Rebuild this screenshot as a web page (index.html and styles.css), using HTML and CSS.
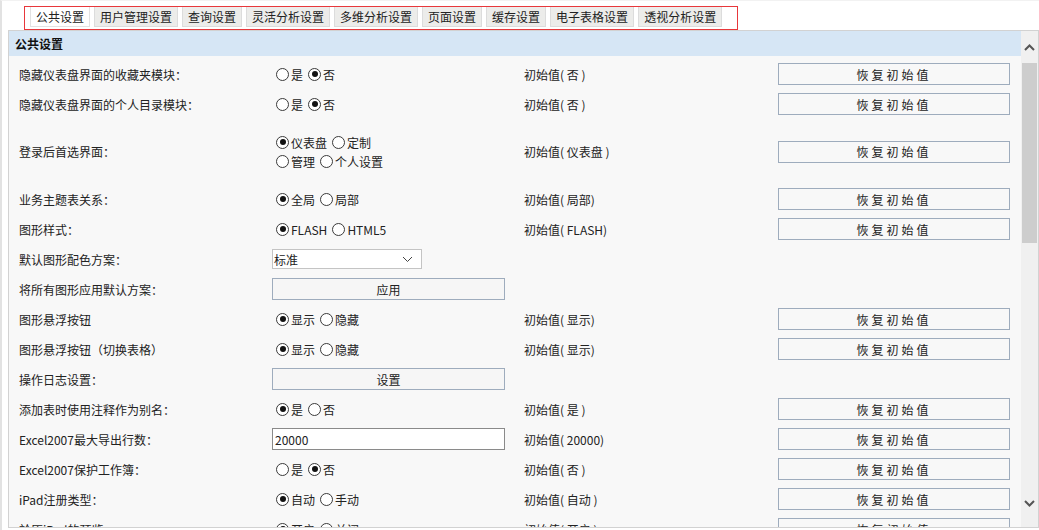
FILE: index.html
```html
<!DOCTYPE html>
<html lang="zh-CN">
<head>
    <meta charset="UTF-8">
    <title>公共设置</title>
    <link rel="stylesheet" href="styles.css">
</head>
<body>
<div class="page">
    <!-- 顶部标签 -->
    <div class="tabs">
        <div class="tab active">公共设置</div>
        <div class="tab">用户管理设置</div>
        <div class="tab">查询设置</div>
        <div class="tab">灵活分析设置</div>
        <div class="tab">多维分析设置</div>
        <div class="tab">页面设置</div>
        <div class="tab">缓存设置</div>
        <div class="tab">电子表格设置</div>
        <div class="tab">透视分析设置</div>
    </div>

    <div class="panel">
        <div class="panel-main">
            <div class="panel-title">公共设置</div>
            <div class="rows">
                <div class="row">
                    <div class="label">隐藏仪表盘界面的收藏夹模块：</div>
                    <div class="ctrl"><span class="radio"></span>是<span class="radio on"></span>否</div>
                    <div class="init">初始值( 否 )</div>
                    <div><button class="btn-reset">恢复初始值</button></div>
                </div>
                <div class="row">
                    <div class="label">隐藏仪表盘界面的个人目录模块：</div>
                    <div class="ctrl"><span class="radio"></span>是<span class="radio on"></span>否</div>
                    <div class="init">初始值( 否 )</div>
                    <div><button class="btn-reset">恢复初始值</button></div>
                </div>
                <div class="row tall">
                    <div class="label">登录后首选界面：</div>
                    <div class="ctrl two-line">
                        <div><span class="radio on"></span>仪表盘<span class="radio"></span>定制</div>
                        <div><span class="radio"></span>管理<span class="radio"></span>个人设置</div>
                    </div>
                    <div class="init">初始值( 仪表盘 )</div>
                    <div><button class="btn-reset">恢复初始值</button></div>
                </div>
                <div class="row">
                    <div class="label">业务主题表关系：</div>
                    <div class="ctrl"><span class="radio on"></span>全局<span class="radio"></span>局部</div>
                    <div class="init">初始值( 局部)</div>
                    <div><button class="btn-reset">恢复初始值</button></div>
                </div>
                <div class="row">
                    <div class="label">图形样式：</div>
                    <div class="ctrl"><span class="radio on"></span>FLASH<span class="radio"></span>HTML5</div>
                    <div class="init">初始值( FLASH)</div>
                    <div><button class="btn-reset">恢复初始值</button></div>
                </div>
                <div class="row">
                    <div class="label">默认图形配色方案：</div>
                    <div class="ctrl">
                        <div class="select">
                            <span>标准</span>
                            <svg width="11" height="7" viewBox="0 0 11 7"><path d="M1 1 L5.5 5.5 L10 1" fill="none" stroke="#444" stroke-width="1"/></svg>
                        </div>
                    </div>
                    <div></div>
                    <div></div>
                </div>
                <div class="row">
                    <div class="label">将所有图形应用默认方案：</div>
                    <div class="ctrl"><button class="btn-wide">应用</button></div>
                    <div></div>
                    <div></div>
                </div>
                <div class="row">
                    <div class="label">图形悬浮按钮</div>
                    <div class="ctrl"><span class="radio on"></span>显示<span class="radio"></span>隐藏</div>
                    <div class="init">初始值( 显示)</div>
                    <div><button class="btn-reset">恢复初始值</button></div>
                </div>
                <div class="row">
                    <div class="label">图形悬浮按钮（切换表格）</div>
                    <div class="ctrl"><span class="radio on"></span>显示<span class="radio"></span>隐藏</div>
                    <div class="init">初始值( 显示)</div>
                    <div><button class="btn-reset">恢复初始值</button></div>
                </div>
                <div class="row">
                    <div class="label">操作日志设置：</div>
                    <div class="ctrl"><button class="btn-wide">设置</button></div>
                    <div></div>
                    <div></div>
                </div>
                <div class="row">
                    <div class="label">添加表时使用注释作为别名：</div>
                    <div class="ctrl"><span class="radio on"></span>是<span class="radio"></span>否</div>
                    <div class="init">初始值( 是 )</div>
                    <div><button class="btn-reset">恢复初始值</button></div>
                </div>
                <div class="row">
                    <div class="label">Excel2007最大导出行数：</div>
                    <div class="ctrl"><input class="text-input" type="text" value="20000"></div>
                    <div class="init">初始值( 20000)</div>
                    <div><button class="btn-reset">恢复初始值</button></div>
                </div>
                <div class="row">
                    <div class="label">Excel2007保护工作簿：</div>
                    <div class="ctrl"><span class="radio"></span>是<span class="radio on"></span>否</div>
                    <div class="init">初始值( 否 )</div>
                    <div><button class="btn-reset">恢复初始值</button></div>
                </div>
                <div class="row">
                    <div class="label">iPad注册类型：</div>
                    <div class="ctrl"><span class="radio on"></span>自动<span class="radio"></span>手动</div>
                    <div class="init">初始值( 自动 )</div>
                    <div><button class="btn-reset">恢复初始值</button></div>
                </div>
                <div class="row">
                    <div class="label">於原iPad的预览：</div>
                    <div class="ctrl"><span class="radio on"></span>开启<span class="radio"></span>关闭</div>
                    <div class="init">初始值( 开启 )</div>
                    <div><button class="btn-reset">恢复初始值</button></div>
                </div>
            </div>
        </div>

        <!-- 滚动条 -->
        <div class="scrollbar">
            <div class="sb-up">
                <svg width="11" height="7" viewBox="0 0 11 7"><path d="M1 6 L5.5 1.5 L10 6" fill="none" stroke="#555" stroke-width="2"/></svg>
            </div>
            <div class="sb-thumb"></div>
            <div class="sb-space"></div>
            <div class="sb-down">
                <svg width="11" height="7" viewBox="0 0 11 7"><path d="M1 1 L5.5 5.5 L10 1" fill="none" stroke="#555" stroke-width="2"/></svg>
            </div>
        </div>
    </div>
</div>
</body>
</html>
```

FILE: styles.css
```css
html, body {
    margin: 0;
    padding: 0;
    height: 530px;
    overflow: hidden;
    background: #fff;
    font-family: "Microsoft YaHei", "Noto Sans CJK SC", sans-serif;
    font-size: 12px;
    color: #222;
}
.page {
    height: 530px;
    box-sizing: border-box;
    border-left: 2px solid #e2e2e2;
    border-top: 1px solid #f2f2f2;
    padding-top: 5px;
}

/* 标签栏 */
.tabs {
    display: flex;
    gap: 4px;
    width: 702px;
    margin-left: 22px;
    padding: 0 5px 1px 5px;
    border: 1px solid #e8373b;
    height: 21px;
}
.tab {
    height: 20px;
    line-height: 20px;
    padding: 0 5px;
    background: #ececea;
    border: 1px solid #dcdcdc;
    border-top: none;
    box-sizing: border-box;
    white-space: nowrap;
    color: #222;
}
.tab.active {
    background: #fff;
    border-color: #e2e2e2;
}

/* 主面板 */
.panel {
    display: flex;
    margin-left: 6px;
    height: 498px;
    box-sizing: border-box;
    border: 1px solid #d2d2d2;
    background: #f8f8f8;
    overflow: hidden;
}
.panel-main {
    flex: 1;
    overflow: hidden;
}
.panel-title {
    height: 25px;
    line-height: 25px;
    padding-left: 6px;
    background: #d6e6f5;
    font-weight: bold;
    color: #111;
}
.rows {
    padding: 3px 0 0 10px;
}
.row {
    display: grid;
    grid-template-columns: 253px 252px 254px 232px;
    align-items: center;
    height: 30px;
}
.row.tall {
    height: 65px;
}
.ctrl {
    display: flex;
    align-items: center;
    white-space: nowrap;
}
.ctrl.two-line {
    flex-direction: column;
    align-items: flex-start;
    line-height: 19px;
}
.ctrl.two-line > div {
    display: flex;
    align-items: center;
}
.radio {
    display: inline-block;
    flex: none;
    width: 13px;
    height: 13px;
    box-sizing: border-box;
    border: 1px solid #3a3a3a;
    border-radius: 50%;
    margin: 0 2px 0 5px;
    background: #fff;
    position: relative;
}
.radio:first-child {
    margin-left: 4px;
}
.radio.on::after {
    content: "";
    position: absolute;
    left: 2.5px;
    top: 2.5px;
    width: 6px;
    height: 6px;
    border-radius: 50%;
    background: #111;
}

.btn-reset {
    width: 232px;
    height: 22px;
    box-sizing: border-box;
    border: 1px solid #9eacbd;
    background: #f8f8f8;
    font-family: inherit;
    font-size: 12px;
    letter-spacing: 3px;
    color: #222;
    padding: 0;
}
.btn-wide {
    width: 233px;
    height: 22px;
    box-sizing: border-box;
    border: 1px solid #9eacbd;
    background: #f6f6f6;
    font-family: inherit;
    font-size: 12px;
    color: #222;
    padding: 0;
}
.select {
    width: 150px;
    height: 20px;
    box-sizing: border-box;
    border: 1px solid #c4c4c4;
    background: #fff;
    display: flex;
    align-items: center;
    justify-content: space-between;
    padding: 0 8px 0 1px;
}
.text-input {
    width: 233px;
    height: 22px;
    box-sizing: border-box;
    border: 1px solid #8a8a8a;
    background: #fff;
    font-family: inherit;
    font-size: 12px;
    color: #222;
    padding: 0 2px;
    outline: none;
}

/* 滚动条 */
.scrollbar {
    width: 17px;
    background: #f0f0f0;
    display: flex;
    flex-direction: column;
    align-items: center;
}
.sb-up {
    height: 32px;
    display: flex;
    align-items: center;
    justify-content: center;
}
.sb-thumb {
    width: 15px;
    height: 180px;
    background: #cdcdcd;
}
.sb-space {
    flex: 1;
}
.sb-down {
    height: 24px;
    margin-bottom: 12px;
    display: flex;
    align-items: center;
    justify-content: center;
}
```
